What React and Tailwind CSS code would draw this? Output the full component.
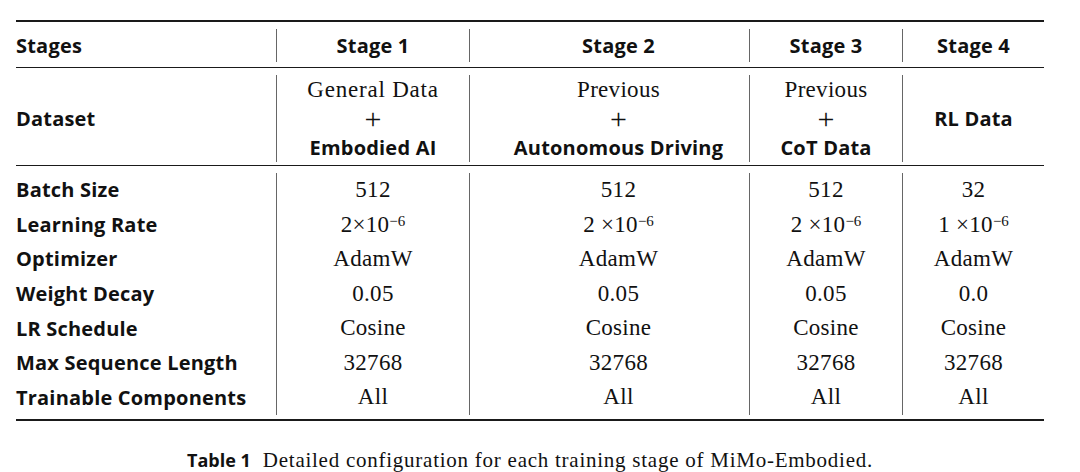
import React from "react";

const sans = { fontFamily: "'Open Sans', 'Liberation Sans', sans-serif" };
const serif = { fontFamily: "'Liberation Serif', 'DejaVu Serif', serif" };

const cols = "grid grid-cols-[260px_193px_280px_153px_142px]";
const vline = "border-l border-[#666]";

function Exp({ base, space }) {
  return (
    <span className="whitespace-pre">
      {base}
      {space ? " " : ""}×10
      <sup className="text-[15px] relative -top-[6px] tracking-normal">−6</sup>
    </span>
  );
}

function Plus() {
  return (
    <span className="text-[30px] leading-[29px] font-light" style={serif}>
      +
    </span>
  );
}

const rows = [
  ["Batch Size", "512", "512", "512", "32"],
  ["Learning Rate", <Exp base="2" />, <Exp base="2" space />, <Exp base="2" space />, <Exp base="1" space />],
  ["Optimizer", "AdamW", "AdamW", "AdamW", "AdamW"],
  ["Weight Decay", "0.05", "0.05", "0.05", "0.0"],
  ["LR Schedule", "Cosine", "Cosine", "Cosine", "Cosine"],
  ["Max Sequence Length", "32768", "32768", "32768", "32768"],
  ["Trainable Components", "All", "All", "All", "All"],
];

const label = "text-[20px] font-bold tracking-[0.2px]";
const val = "text-[23px] tracking-[0.3px]";

export default function App() {
  return (
    <div className="w-[1080px] h-[472px] bg-white text-[#111] overflow-hidden">
      <div className="ml-4 w-[1028px] pt-5">
        <div className="h-[2px] bg-[#1a1a1a]" />
        {/* header */}
        <div className="pt-[7px] pb-[5px]">
          <div className={cols + " h-[33px] " + label} style={sans}>
            <div className="flex items-center">Stages</div>
            <div className={"flex items-center justify-center " + vline}>Stage 1</div>
            <div className={"flex items-center justify-center pl-[18px] " + vline}>Stage 2</div>
            <div className={"flex items-center justify-center " + vline}>Stage 3</div>
            <div className={"flex items-center justify-center " + vline}>Stage 4</div>
          </div>
        </div>
        <div className="h-px bg-[#1a1a1a]" />
        {/* dataset */}
        <div className="pt-[7px] pb-[7px]">
          <div className={cols + " h-[83px]"}>
            <div className={"flex items-center " + label} style={sans}>Dataset</div>
            <div className={"flex flex-col items-center justify-center leading-[29px] " + vline}>
              <span className={val + " tracking-[0.8px]"} style={serif}>General Data</span>
              <Plus />
              <span className={label} style={sans}>Embodied AI</span>
            </div>
            <div className={"flex flex-col items-center justify-center pl-[18px] leading-[29px] " + vline}>
              <span className={val} style={serif}>Previous</span>
              <Plus />
              <span className={label} style={sans}>Autonomous Driving</span>
            </div>
            <div className={"flex flex-col items-center justify-center leading-[29px] " + vline}>
              <span className={val} style={serif}>Previous</span>
              <Plus />
              <span className={label} style={sans}>CoT Data</span>
            </div>
            <div className={"flex items-center justify-center " + label + " " + vline} style={sans}>
              RL Data
            </div>
          </div>
        </div>
        <div className="h-px bg-[#1a1a1a]" />
        {/* body */}
        <div className="pt-[7px] pb-[4px]">
          <div className={cols + " grid-rows-[repeat(7,34.57px)]"}>
            {rows.map((r, i) => (
              <React.Fragment key={i}>
                <div className={"flex items-center " + label} style={sans}>{r[0]}</div>
                {r.slice(1).map((v, j) => (
                  <div
                    key={j}
                    className={
                      "flex items-center justify-center " + val + " " + vline + " " +
                      (j === 1 ? "pl-[18px]" : "")
                    }
                    style={serif}
                  >
                    {v}
                  </div>
                ))}
              </React.Fragment>
            ))}
          </div>
        </div>
        <div className="h-[2px] bg-[#1a1a1a]" />
        <div className="mt-[24px] flex justify-center items-baseline">
          <span className="text-[18px] font-bold" style={sans}>Table 1</span>
          <span className="ml-3 text-[21px] tracking-[0.75px]" style={serif}>
            Detailed configuration for each training stage of MiMo-Embodied.
          </span>
        </div>
      </div>
    </div>
  );
}
